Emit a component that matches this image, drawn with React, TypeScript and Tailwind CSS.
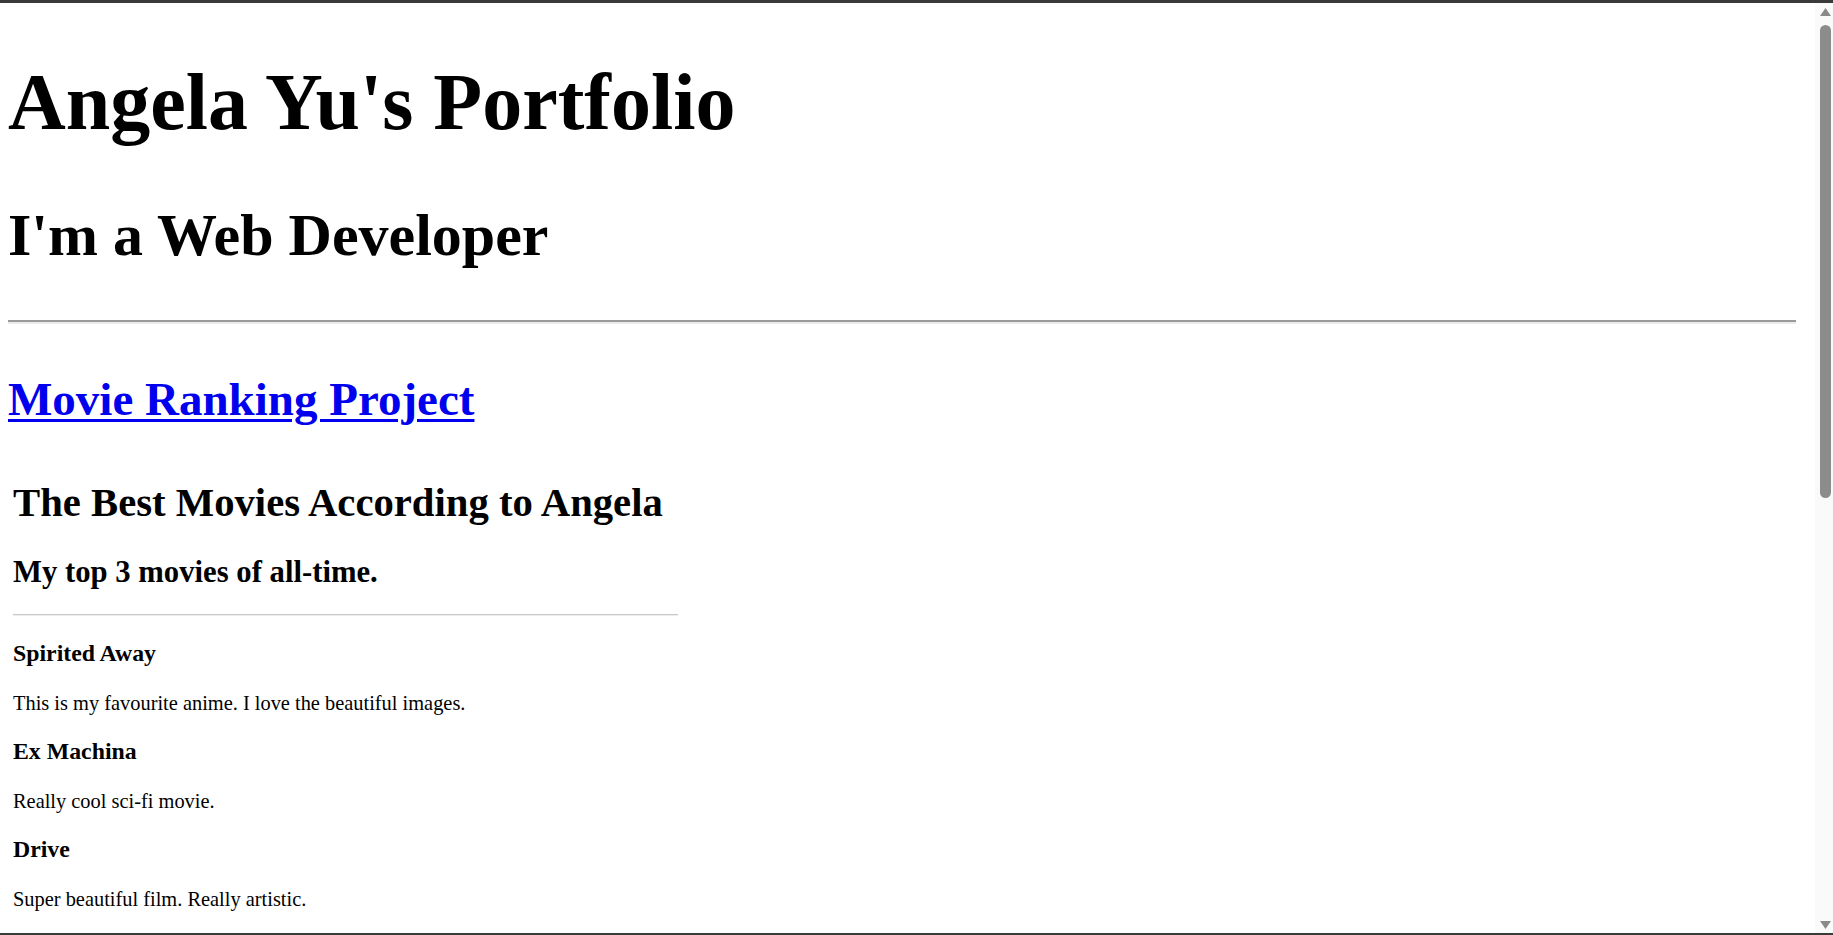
import React from "react";

const serif = { fontFamily: '"Liberation Serif", "Times New Roman", Times, serif' };

function Scrollbar() {
  return (
    <div className="w-[18px] bg-[#fafafa] flex flex-col pl-[5px]">
      <svg className="mt-[5px]" width="11" height="8" viewBox="0 0 11 8">
        <polygon points="5.5,0 11,8 0,8" fill="#8a8a8a" />
      </svg>
      <div className="mt-[9px] w-[11px] h-[473px] rounded-full bg-[#8c8c8c]" />
      <div className="flex-1" />
      <svg className="mb-[4px]" width="11" height="8" viewBox="0 0 11 8">
        <polygon points="0,0 11,0 5.5,8" fill="#8a8a8a" />
      </svg>
    </div>
  );
}

export default function App() {
  return (
    <div
      className="h-[935px] w-[1833px] overflow-hidden bg-white flex flex-col border-t-[3px] border-b-2 border-[#3a3a3a]"
      style={serif}
    >
      <div className="flex flex-1 min-h-0">
        <main className="flex-1 pl-[8px] pr-[19px] text-black">
          <h1 className="mt-[59px] text-[80px] leading-none font-bold">Angela Yu's Portfolio</h1>
          <h2 className="mt-[63px] text-[60px] leading-none font-bold">I'm a Web Developer</h2>
          <hr className="mt-[55px] h-0 border-0 border-t-2 border-b-2 border-t-[#9a9a9a] border-b-[#ececec]" />
          <h3 className="mt-[52px] text-[47px] leading-none font-bold">
            <a href="#" className="text-[#0000ee] underline decoration-[3px] underline-offset-[4px]">
              Movie Ranking Project
            </a>
          </h3>
          <section className="pl-[5px] w-[670px]">
            <h1 className="mt-[60px] text-[40.7px] leading-none font-bold">The Best Movies According to Angela</h1>
            <h2 className="mt-[33px] text-[30.7px] leading-none font-bold">My top 3 movies of all-time.</h2>
            <hr className="mt-[27px] h-0 border-0 border-t border-b border-t-[#c8c8c8] border-b-[#ededed]" />
            <h3 className="mt-[26px] text-[23.8px] leading-none font-bold">Spirited Away</h3>
            <p className="mt-[27px] text-[20.4px] leading-none">This is my favourite anime. I love the beautiful images.</p>
            <h3 className="mt-[26px] text-[23.8px] leading-none font-bold">Ex Machina</h3>
            <p className="mt-[28px] text-[20.4px] leading-none">Really cool sci-fi movie.</p>
            <h3 className="mt-[26px] text-[23.8px] leading-none font-bold">Drive</h3>
            <p className="mt-[27px] text-[20.4px] leading-none">Super beautiful film. Really artistic.</p>
          </section>
        </main>
        <Scrollbar />
      </div>
    </div>
  );
}
